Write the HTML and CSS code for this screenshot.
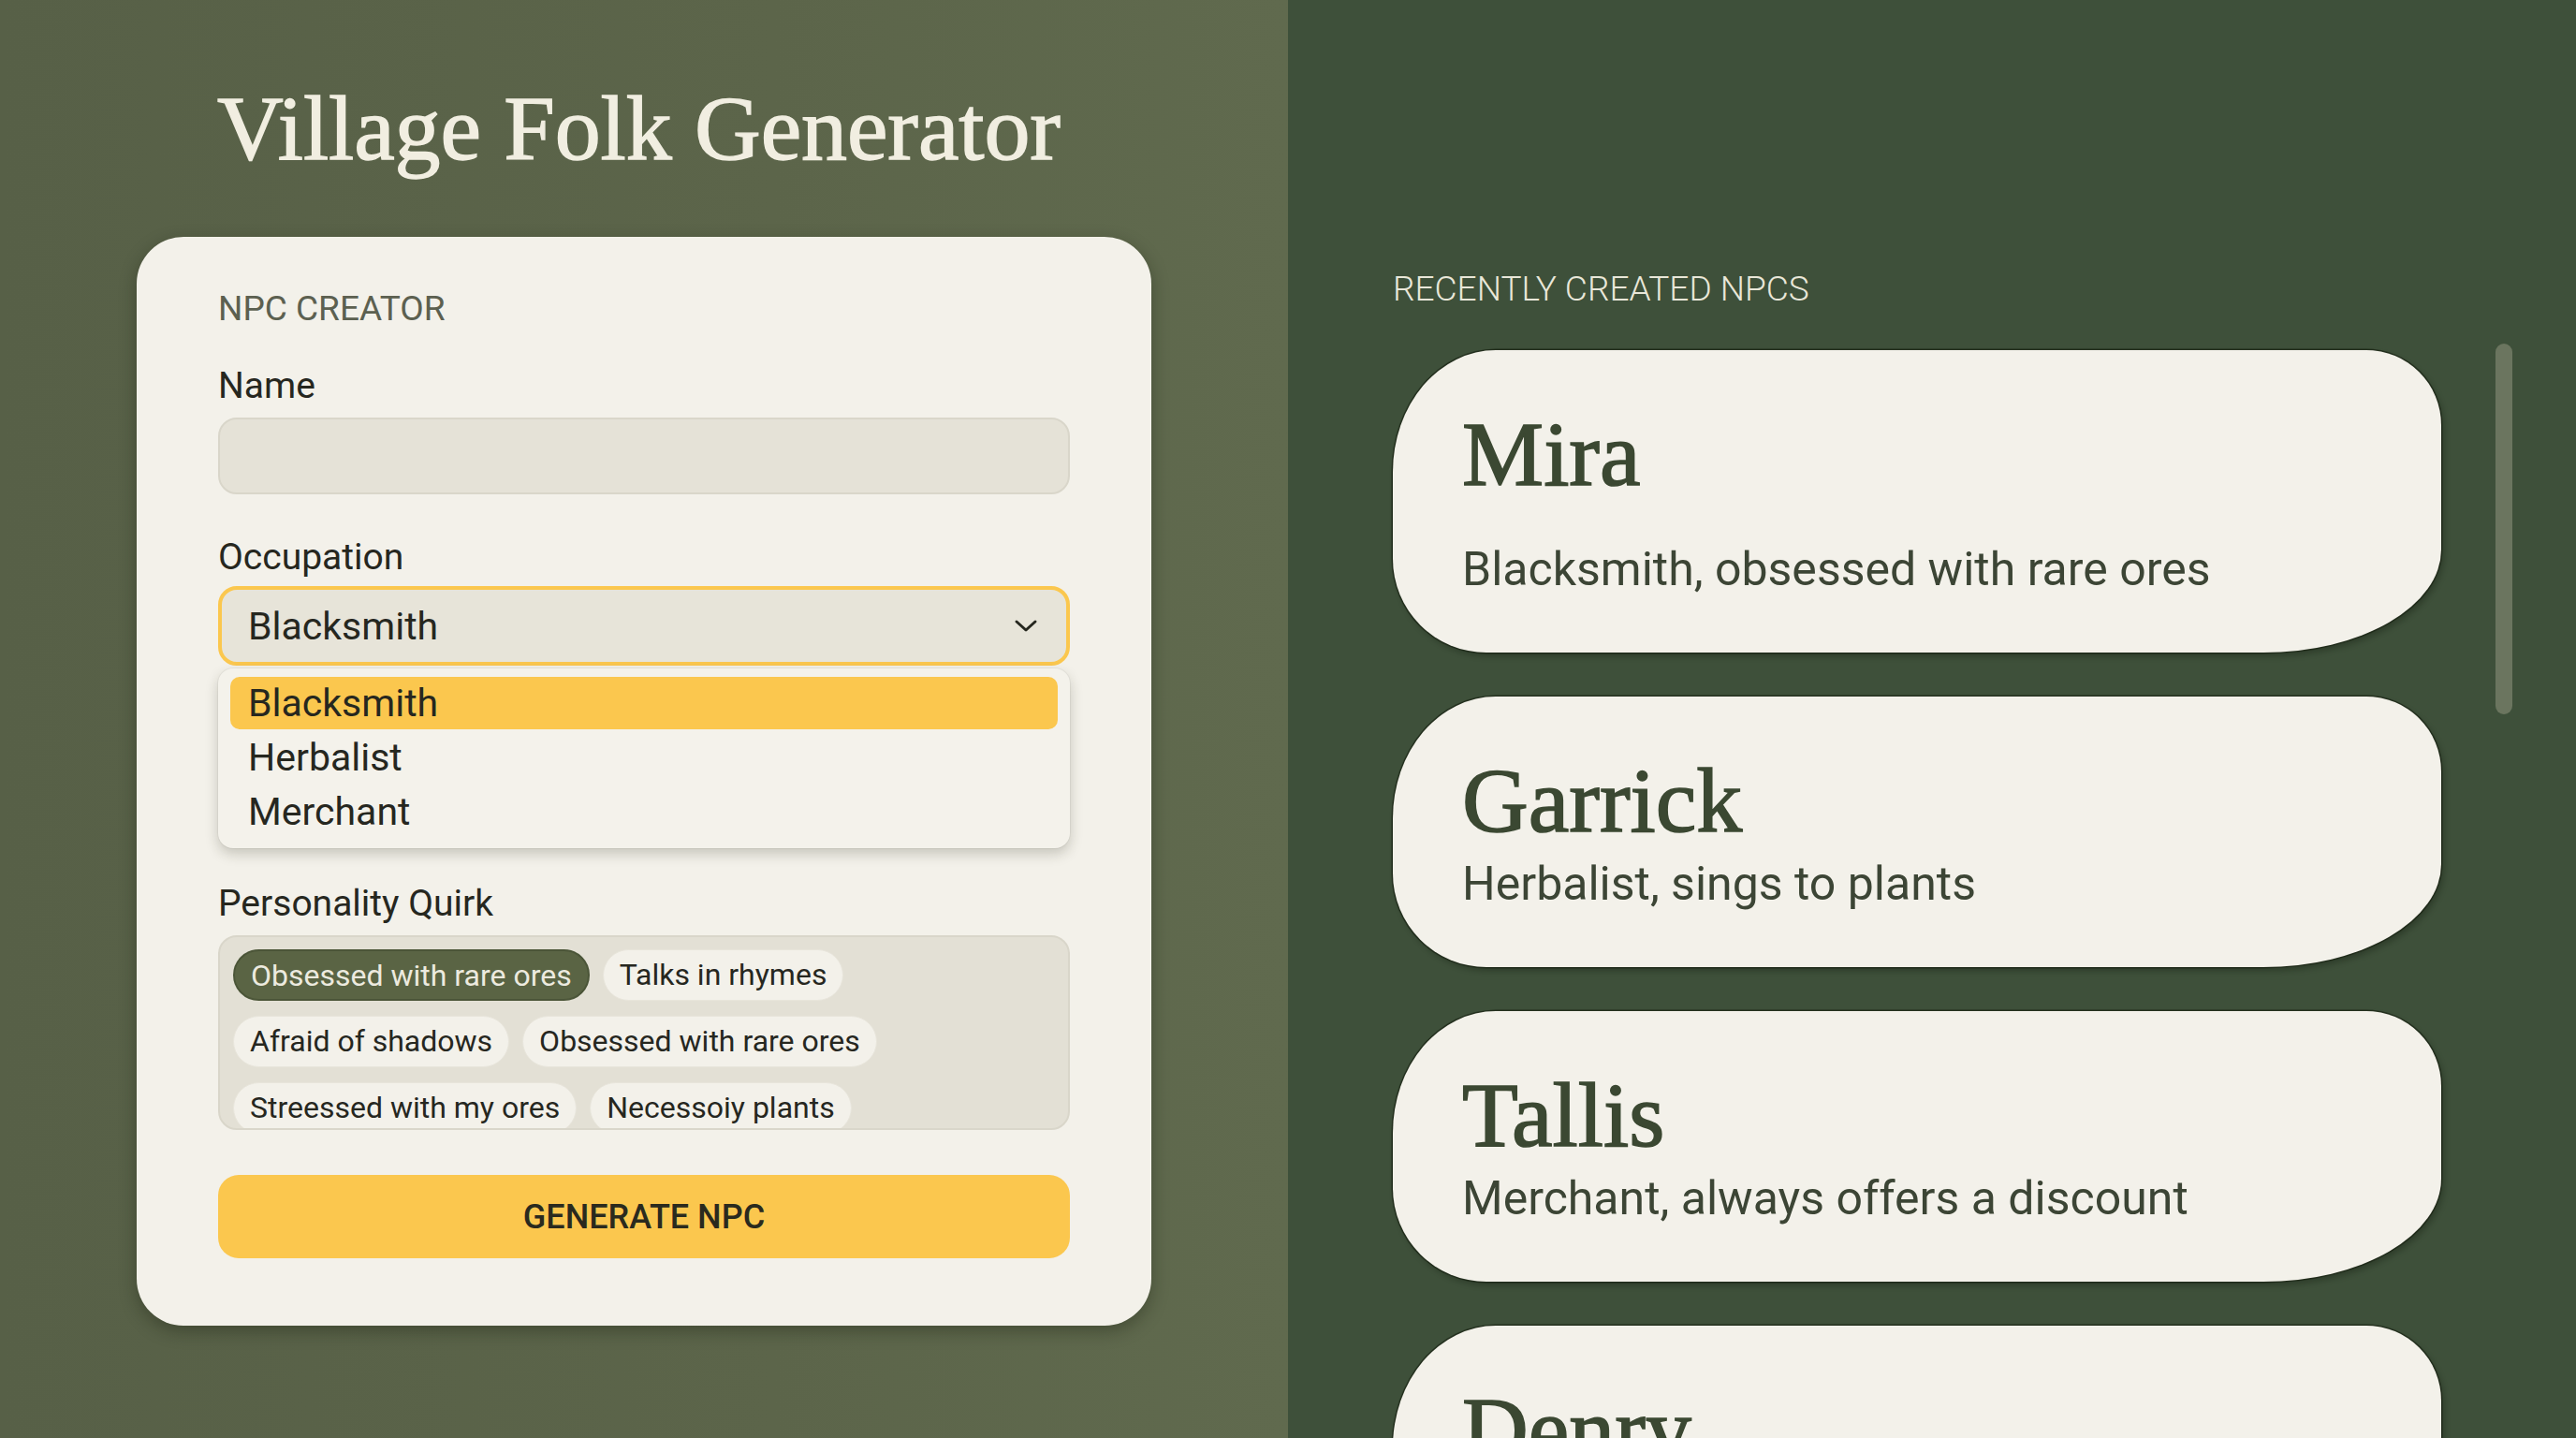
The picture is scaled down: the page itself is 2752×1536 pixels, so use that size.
FILE: index.html
```html
<!DOCTYPE html>
<html lang="en">
<head>
    <meta charset="UTF-8">
    <meta name="viewport" content="width=device-width, initial-scale=1.0">
    <title>Village Folk Generator</title>
    <link rel="stylesheet" href="styles.css">
</head>
<body>
    <div class="layout">

        <!-- Creator side -->
        <section class="creator-side">
            <h1 class="title">Village Folk Generator</h1>

            <div class="creator-card">
                <div class="section-label">NPC CREATOR</div>

                <label class="field-label" for="npc-name">Name</label>
                <input class="text-input" type="text" id="npc-name">

                <label class="field-label field-gap">Occupation</label>
                <div class="select-box">
                    <span>Blacksmith</span>
                    <svg class="chevron" width="26" height="16" viewBox="0 0 26 16">
                        <path d="M3 3 L13 12 L23 3" fill="none" stroke="#26271f" stroke-width="3" stroke-linecap="round" stroke-linejoin="round"/>
                    </svg>
                </div>
                <ul class="dropdown">
                    <li class="option selected">Blacksmith</li>
                    <li class="option">Herbalist</li>
                    <li class="option">Merchant</li>
                </ul>

                <label class="field-label quirk-label">Personality Quirk</label>
                <div class="chip-box">
                    <div class="chip-row">
                        <span class="chip active">Obsessed with rare ores</span>
                        <span class="chip">Talks in rhymes</span>
                    </div>
                    <div class="chip-row">
                        <span class="chip">Afraid of shadows</span>
                        <span class="chip">Obsessed with rare ores</span>
                    </div>
                    <div class="chip-row">
                        <span class="chip">Streessed with my ores</span>
                        <span class="chip">Necessoiy plants</span>
                    </div>
                </div>

                <button class="generate-btn">GENERATE NPC</button>
            </div>
        </section>

        <!-- Recent NPC list -->
        <section class="recent-side">
            <div class="section-label light">RECENTLY CREATED NPCS</div>
            <div class="recent-row">
                <div class="npc-list">
                    <div class="npc-card first">
                        <h2 class="npc-name">Mira</h2>
                        <p class="npc-desc">Blacksmith, obsessed with rare ores</p>
                    </div>
                    <div class="npc-card">
                        <h2 class="npc-name">Garrick</h2>
                        <p class="npc-desc">Herbalist, sings to plants</p>
                    </div>
                    <div class="npc-card">
                        <h2 class="npc-name">Tallis</h2>
                        <p class="npc-desc">Merchant, always offers a discount</p>
                    </div>
                    <div class="npc-card">
                        <h2 class="npc-name">Denry</h2>
                        <p class="npc-desc">Miller, counts every grain</p>
                    </div>
                </div>
                <div class="scroll-thumb"></div>
            </div>
        </section>

    </div>
</body>
</html>
```

FILE: styles.css
```css
:root {
    --olive: #5b6449;
    --forest: #3e503a;
    --paper: #f3f1ea;
    --field: #e5e2d7;
    --field-edge: #d9d6ca;
    --gold: #fbc74e;
    --ink: #26271f;
    --moss-ink: #3b4832;
}

* {
    box-sizing: border-box;
}

html, body {
    margin: 0;
    height: 100%;
    overflow: hidden;
}

body {
    font-family: Roboto, "Liberation Sans", sans-serif;
    color: var(--ink);
}

.layout {
    display: flex;
    height: 1536px;
    overflow: hidden;
}

/* Left half: title + creator form */
.creator-side {
    width: 1376px;
    background: linear-gradient(90deg, #576047 0%, #5c654a 60%, #606a4e 100%);
    padding: 88px 0 0 146px;
}

.title {
    font-family: "Liberation Serif", "Times New Roman", serif;
    font-weight: 400;
    font-size: 98px;
    line-height: 1;
    color: #f1eee1;
    -webkit-text-stroke: 1.4px #f1eee1;
    margin: 0 0 67px 86px;
    letter-spacing: -0.1px;
}

.creator-card {
    width: 1084px;
    background: var(--paper);
    border-radius: 50px;
    padding: 57px 87px 72px;
    display: flex;
    flex-direction: column;
    box-shadow: 0 6px 18px rgba(20, 25, 12, 0.35);
}

.section-label {
    font-size: 37px;
    line-height: 40px;
    color: #5c6050;
}

.section-label.light {
    color: #e9e7d9;
    font-weight: 300;
}

.field-label {
    font-size: 39px;
    line-height: 44px;
    color: #26271f;
    margin-top: 40px;
}

.field-gap {
    margin-top: 45px;
}

.text-input {
    margin-top: 12px;
    height: 82px;
    border: 2px solid var(--field-edge);
    border-radius: 20px;
    background: var(--field);
    outline: none;
}

.select-box {
    margin-top: 9px;
    height: 85px;
    border: 4px solid var(--gold);
    border-radius: 20px;
    background: #e7e4d9;
    display: flex;
    align-items: center;
    justify-content: space-between;
    padding: 0 30px 0 28px;
    font-size: 41px;
}

.chevron {
    display: block;
}

.dropdown {
    list-style: none;
    margin: 3px 0 0;
    padding: 9px 13px 11px;
    background: #f4f2eb;
    border-radius: 16px;
    box-shadow: 0 6px 14px rgba(40, 40, 25, 0.22), 0 0 0 1px rgba(0, 0, 0, 0.04);
    display: flex;
    flex-direction: column;
    gap: 2px;
}

.option {
    height: 56px;
    line-height: 56px;
    padding-left: 19px;
    font-size: 41px;
    border-radius: 10px;
}

.option.selected {
    background: var(--gold);
}

.quirk-label {
    margin-top: 37px;
}

/* Quirk chips, clipped to the box like a scroll area */
.chip-box {
    margin-top: 12px;
    height: 208px;
    overflow: hidden;
    background: #e3e0d5;
    border: 2px solid var(--field-edge);
    border-radius: 20px;
    padding: 13px 14px;
    display: flex;
    flex-direction: column;
    gap: 16px;
}

.chip-row {
    display: flex;
    gap: 14px;
}

.chip {
    height: 55px;
    line-height: 53px;
    padding: 0 17px;
    border-radius: 28px;
    background: #f3f1ea;
    border: 1px solid #e8e5db;
    font-size: 32px;
    color: #26271f;
    white-space: nowrap;
    flex-shrink: 0;
}

.chip.active {
    background: #5a6444;
    border: 2px solid #4b5538;
    color: #eceadf;
}

.generate-btn {
    margin-top: 48px;
    height: 89px;
    border: none;
    border-radius: 22px;
    background: var(--gold);
    font-family: Roboto, "Liberation Sans", sans-serif;
    font-size: 36px;
    font-weight: 500;
    color: #2a2a1e;
    cursor: pointer;
}

/* Right half: recently created list */
.recent-side {
    width: 1376px;
    background: var(--forest);
    padding: 289px 0 0 112px;
}

.recent-row {
    display: flex;
    margin-top: 45px;
}

.npc-list {
    width: 1120px;
    display: flex;
    flex-direction: column;
    gap: 47px;
}

.npc-card {
    background: var(--paper);
    border-radius: 110px 80px 190px 100px / 130px 80px 110px 100px;
    padding: 62px 74px 61px;
    box-shadow: 0 0 0 1.5px rgba(25, 35, 20, 0.7), 3px 4px 6px rgba(10, 15, 8, 0.3);
}

.npc-name {
    font-family: "Liberation Serif", "Times New Roman", serif;
    font-weight: 400;
    font-size: 98px;
    line-height: 1;
    margin: 0;
    color: var(--moss-ink);
    -webkit-text-stroke: 1.6px var(--moss-ink);
}

.npc-desc {
    margin: 12px 0 0;
    font-size: 50px;
    line-height: 56px;
    color: #3c4535;
}

.npc-card.first .npc-desc {
    margin-top: 46px;
}

.scroll-thumb {
    width: 18px;
    height: 396px;
    margin: -7px 0 0 58px;
    border-radius: 9px;
    background: #6b755f;
    flex-shrink: 0;
}
```
